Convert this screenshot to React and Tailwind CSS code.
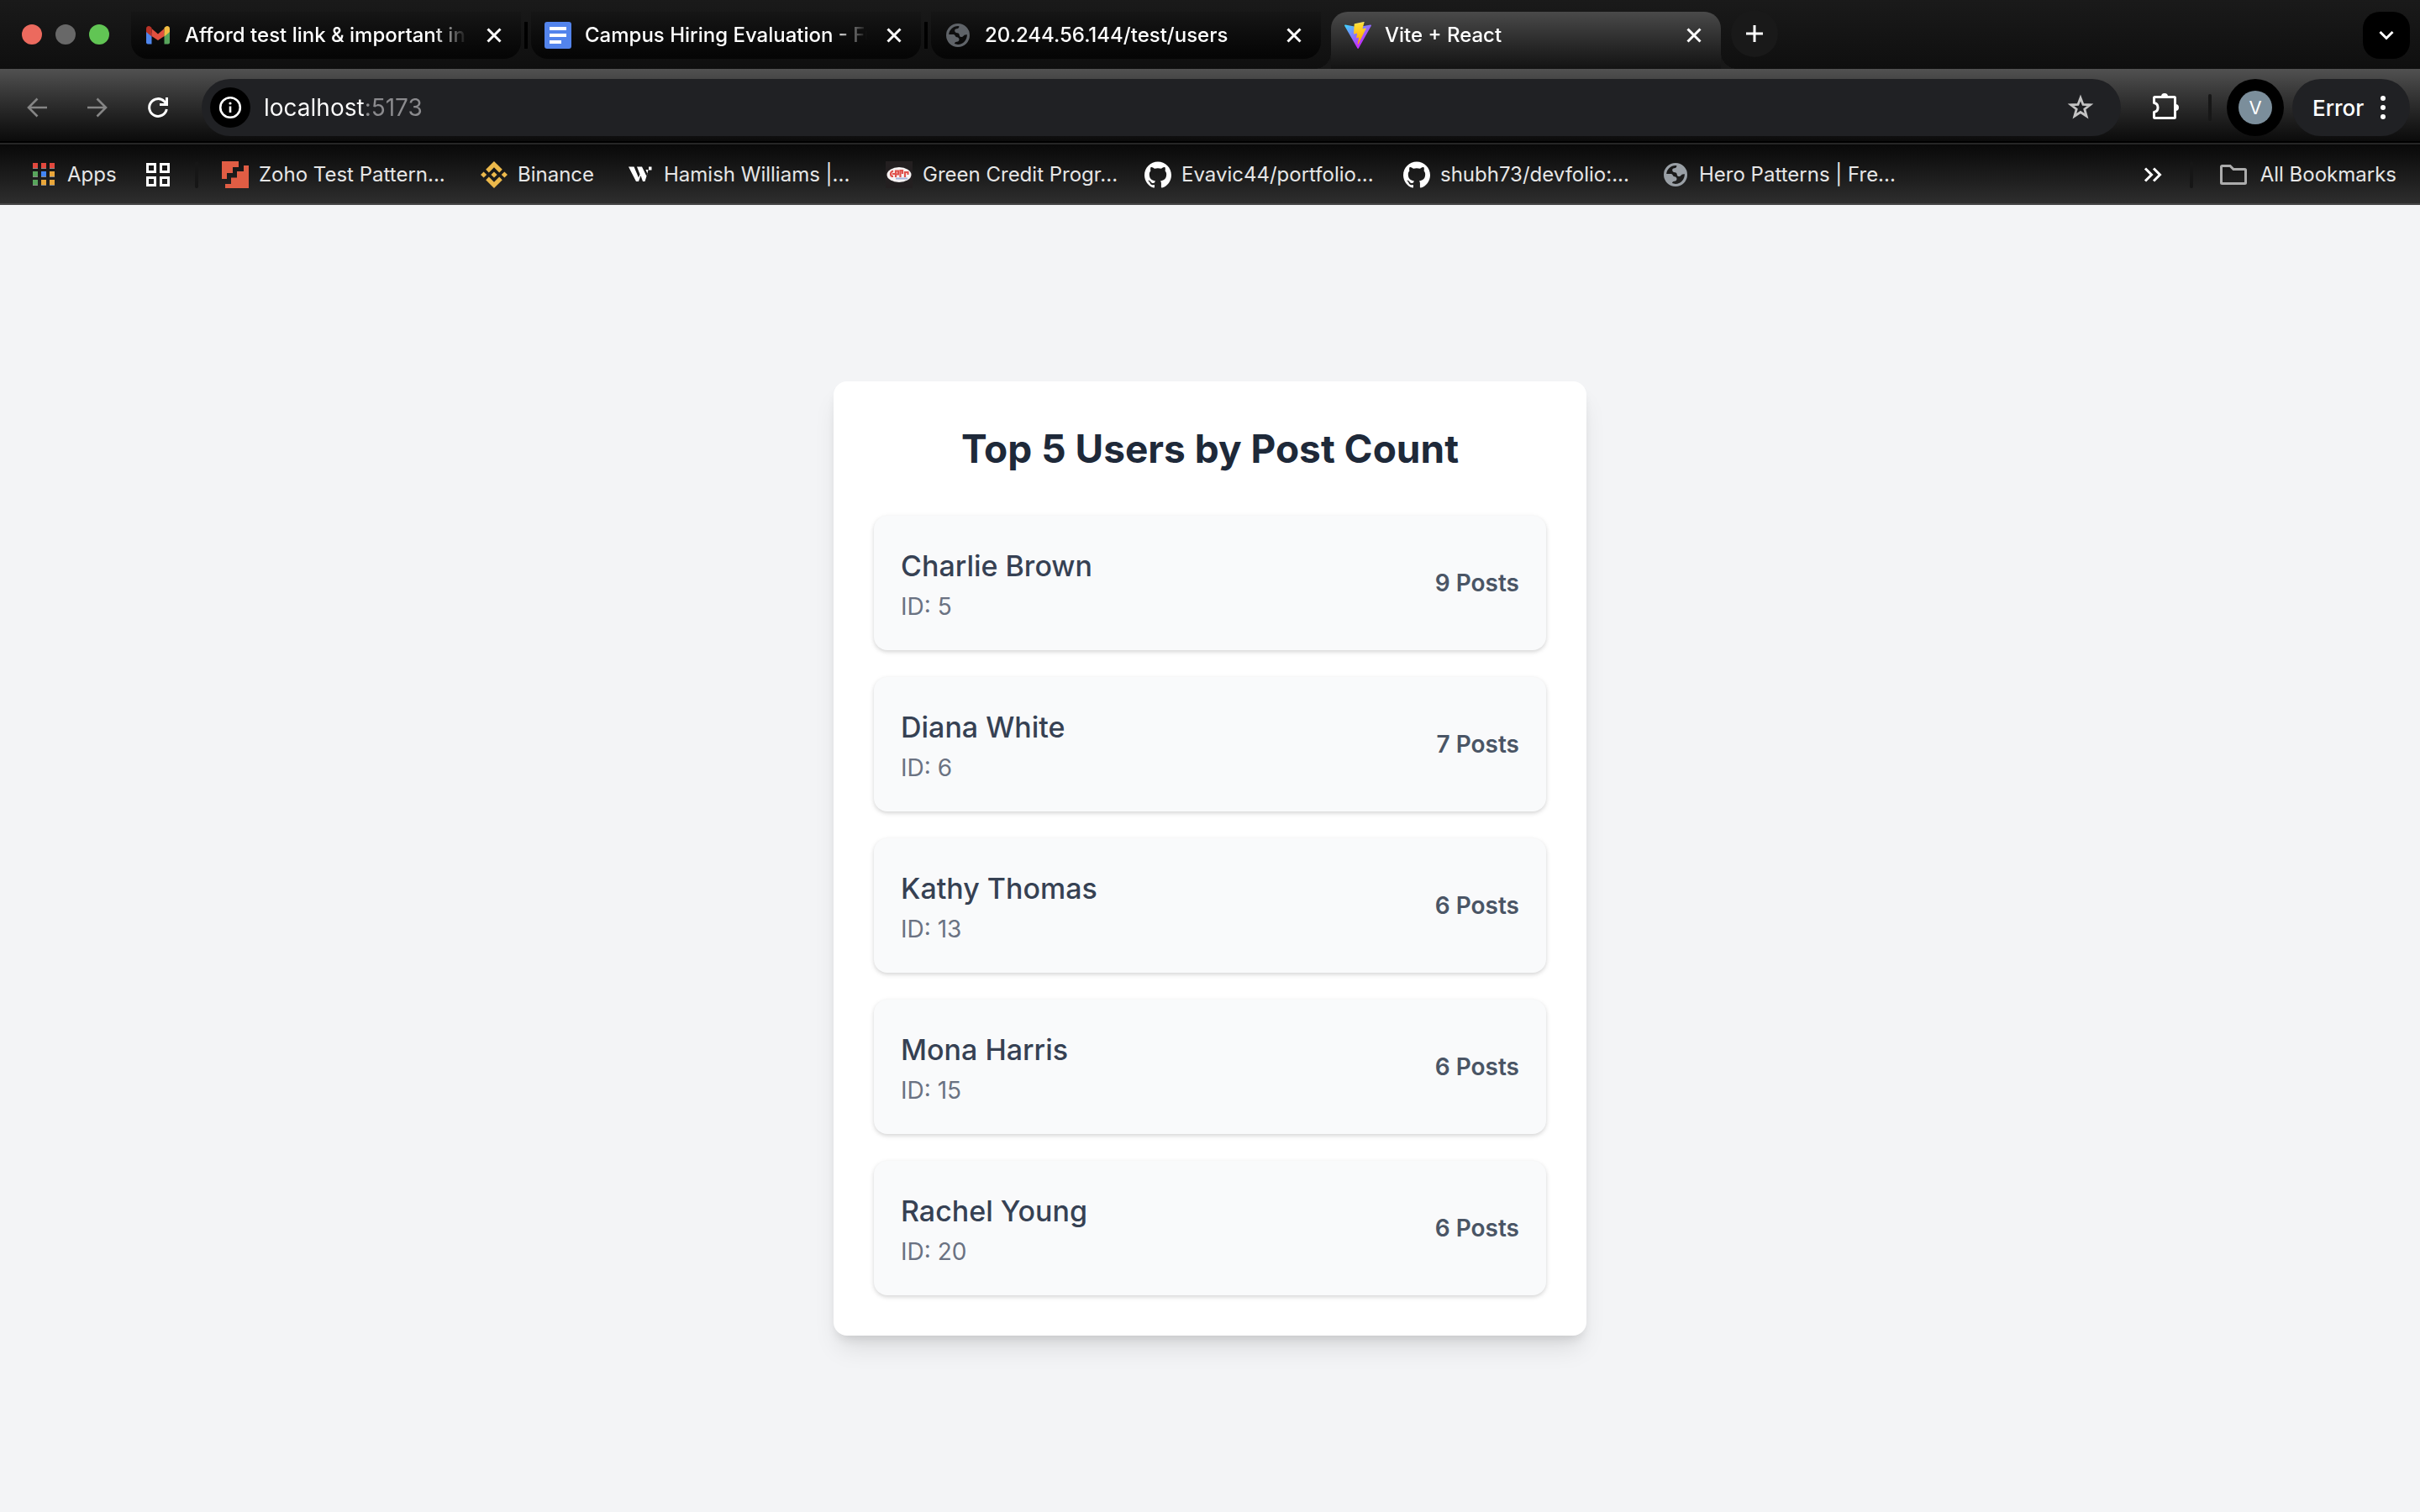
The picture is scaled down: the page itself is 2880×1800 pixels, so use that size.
import React from "react";
import { SiBinance, SiGithub } from "react-icons/si";

function GmailIcon() {
  return (
    <svg viewBox="0 0 32 32" className="size-8 shrink-0" aria-hidden="true">
      <path d="M2 9v15.500a2 2 0 0 0 2 2h4.500V13z" fill="#4f86ec" />
      <path d="M30 9v15.500a2 2 0 0 1-2 2h-4.500V13z" fill="#58a55c" />
      <path d="M8.500 8v9L16 22l7.500-5V8L16 14.500z" fill="#e2503f" />
      <path d="M2 12V8a3 3 0 0 1 5-2.200L8.500 7v10.500z" fill="#b93328" />
      <path d="M30 12V8a3 3 0 0 0-5-2.200L23.500 7v10.500z" fill="#f2bd42" />
    </svg>
  );
}

function DocsIcon() {
  return (
    <svg viewBox="0 0 32 32" className="size-8 shrink-0" aria-hidden="true">
      <rect width="32" height="32" rx="3" fill="#5384ec" />
      <path d="M6 6h20v4H6zM6 14h20v4H6zM6 22h14v4H6z" fill="#fff" />
    </svg>
  );
}

function GlobeIcon({ className }) {
  return (
    <svg viewBox="0 0 32 32" className={className} aria-hidden="true">
      <path
        fill="currentColor"
        fillRule="evenodd"
        d="M16 2a14 14 0 1 0 0 28 14 14 0 0 0 0-28zM5.200 15C5.700 9.500 10.300 5.200 16 5.100l1.500.1c-.2 2-1.200 2.800-3 3-1.600.2-2.400 1-2.300 2.600.1 1.700 1.300 2.200 3 2.400 1.900.2 2.400 1.200 2.600 2.700.2 1.500 1 2 2.600 2 1.800 0 2.300-1.300 3.200-2.100.8-.6 2-.7 3.300-.6C27 21.700 22 27 16 26.900c-1.700 0-2.800-.3-4-.8.1-1.500.9-2.300 2.600-2.400 1.800-.1 2.900-.9 2.900-2.600 0-1.500-1-2.500-2.700-2.800-1.400-.3-1.700-1.100-2.200-2-.5-1-1.300-1.300-2.700-1.300z"
      />
    </svg>
  );
}

function ViteIcon() {
  return (
    <svg viewBox="0 0 256 257" className="size-8 shrink-0" aria-hidden="true">
      <defs>
        <linearGradient id="viteA" x1="-.828%" x2="57.636%" y1="7.652%" y2="78.411%">
          <stop offset="0%" stopColor="#41d1ff" />
          <stop offset="100%" stopColor="#bd34fe" />
        </linearGradient>
        <linearGradient id="viteB" x1="43.376%" x2="50.316%" y1="2.242%" y2="89.030%">
          <stop offset="0%" stopColor="#ffea83" />
          <stop offset="8.333%" stopColor="#ffdd35" />
          <stop offset="100%" stopColor="#ffa800" />
        </linearGradient>
      </defs>
      <path
        fill="url(#viteA)"
        d="M255.153 37.938L134.897 252.976c-2.483 4.440-8.862 4.466-11.382.048L.875 37.958c-2.746-4.814 1.371-10.646 6.827-9.670l120.385 21.517a6.537 6.537 0 0 0 2.322-.004l117.867-21.483c5.438-.991 9.574 4.796 6.877 9.620Z"
      />
      <path
        fill="url(#viteB)"
        d="M185.432.063L96.440 17.501a3.268 3.268 0 0 0-2.634 3.014l-5.474 92.456a3.268 3.268 0 0 0 3.997 3.378l24.777-5.718c2.318-.535 4.413 1.507 3.936 3.838l-7.361 36.047c-.495 2.426 1.782 4.500 4.151 3.780l15.304-4.649c2.372-.720 4.652 1.360 4.150 3.788l-11.698 56.621c-.732 3.542 3.979 5.473 5.943 2.437l1.313-2.028l72.516-144.720c1.215-2.423-.880-5.186-3.540-4.672l-25.505 4.922c-2.396.462-4.435-1.770-3.759-4.114l16.646-57.705c.677-2.350-1.370-4.583-3.769-4.113Z"
      />
    </svg>
  );
}

function Stroke({ d, width = 3, className = "size-8" }) {
  return (
    <svg viewBox="0 0 32 32" className={className} fill="none" stroke="currentColor" strokeWidth={width} aria-hidden="true">
      <path d={d} />
    </svg>
  );
}

function ReloadIcon() {
  return (
    <svg viewBox="0 0 32 32" className="size-8" fill="none" stroke="currentColor" strokeWidth="3" aria-hidden="true">
      <path d="M26.300 18A10.400 10.400 0 1 1 23.600 8.800L26 11.500" />
      <path d="M26.500 4v8.500H18" />
    </svg>
  );
}

function InfoIcon() {
  return (
    <svg viewBox="0 0 32 32" className="size-8" fill="none" stroke="#fff" aria-hidden="true">
      <circle cx="16" cy="16" r="11.800" strokeWidth="2.600" />
      <path d="M16 14.500v7.500" strokeWidth="2.600" />
      <circle cx="16" cy="11" r="1.600" fill="#fff" stroke="none" />
    </svg>
  );
}

function PuzzleIcon() {
  return (
    <svg viewBox="0 2 36 36" className="size-9" fill="none" aria-hidden="true">
      <path
        d="M4.500 7.500h23a1 1 0 0 1 1 1v23a1 1 0 0 1-1 1h-23a1 1 0 0 1-1-1V25.500a5.600 5.600 0 0 0 0-11V8.500a1 1 0 0 1 1-1z"
        stroke="#fff"
        strokeWidth="3"
        strokeLinejoin="round"
      />
      <path d="M12 7a4 4 0 0 1 8 0zM29 16a4 4 0 0 1 0 8z" fill="#fff" />
    </svg>
  );
}

function AppsIcon() {
  const cells = [
    [3, 2, "#e2483d"], [13, 2, "#e2483d"], [23, 2, "#e2483d"],
    [3, 12, "#58a55c"], [13, 12, "#4285f4"], [23, 12, "#e9a63a"],
    [3, 22, "#58a55c"], [13, 22, "#e9a63a"], [23, 22, "#e9a63a"],
  ];
  return (
    <svg viewBox="0 0 32 32" className="size-8 shrink-0" aria-hidden="true">
      {cells.map(([x, y, c]) => (
        <g key={`${x}-${y}`}>
          <rect x={x} y={y} width="6" height="7" fill="#8a8a8a" />
          <rect x={x} y={y} width="6" height="6" fill={c} />
        </g>
      ))}
    </svg>
  );
}

function ZohoIcon() {
  return (
    <svg viewBox="0 0 32 32" className="size-8 shrink-0" aria-hidden="true">
      <path fill="#e05d44" d="M0 0h20v7h-7v7H6v7H0zM32 5h-6v7h-8v7.500h-7V27H4v5h28z" />
    </svg>
  );
}

function SlantMarkIcon() {
  return (
    <svg viewBox="0 0 32 32" className="size-8 shrink-0" fill="#fff" aria-hidden="true">
      <path d="M2 6.500h6.500L14 19.500l1.500-4-3.500-9h6L23.500 18l1-3-2-5h3l-1.500 6-2.500 8h-2.500L16.500 17 14 24h-3z" />
      <rect x="26" y="6.500" width="3.500" height="4" />
    </svg>
  );
}

function OvalBadgeIcon() {
  return (
    <svg viewBox="0 0 32 32" className="size-8 shrink-0" aria-hidden="true">
      <rect width="32" height="32" fill="#231f20" />
      <ellipse cx="16" cy="16" rx="14.500" ry="9" fill="#f7f3f3" />
      <g fill="none" stroke="#e0524d" strokeWidth="2.200">
        <path d="M9 11.500c-4 1-4 6.500 0 6.500M8 15h3M12 19v-7.500h3v4h-3M17.500 19v-8h2.500v4M23 19v-6h3.500v3" />
      </g>
      <path d="M12 20.500h14" stroke="#a8b4dc" strokeWidth="2" />
    </svg>
  );
}

function GithubIcon() {
  return <SiGithub className="size-8 shrink-0 text-white" aria-hidden="true" />;
}

function CloseButton({ label }) {
  return (
    <button aria-label={label} className="flex size-8 shrink-0 items-center justify-center text-white">
      <Stroke d="M8.500 8.500l15 15M23.500 8.500l-15 15" />
    </button>
  );
}

function TabLabel({ children }) {
  return (
    <span className="min-w-0 flex-1 overflow-hidden text-2xl font-medium whitespace-nowrap text-white [mask-image:linear-gradient(to_right,black_88%,transparent_100%)]">
      {children}
    </span>
  );
}

function InactiveTab({ icon, title }) {
  return (
    <div className="mb-3 flex h-14 w-[464px] items-center gap-4 rounded-b-[20px] bg-linear-to-b from-[#161616] to-[#050505] px-4">
      {icon}
      <TabLabel>{title}</TabLabel>
      <CloseButton label={`Close ${title}`} />
    </div>
  );
}

function TabDivider() {
  return <div className="mx-1 mb-6 h-8 w-1 bg-black" />;
}

function TabStrip() {
  return (
    <div className="flex h-[82px] items-end bg-linear-to-b from-[#1a1a1a] to-[#0f0f0f]">
      <div className="flex h-full items-center gap-4 px-[26px]">
        <button aria-label="Close window" className="size-6 rounded-full bg-[#ec6a5e]" />
        <button aria-label="Minimise window" className="size-6 rounded-full bg-[#686868]" />
        <button aria-label="Zoom window" className="size-6 rounded-full bg-[#61c554]" />
      </div>
      <InactiveTab icon={<GmailIcon />} title="Afford test link & important instructions" />
      <TabDivider />
      <InactiveTab icon={<DocsIcon />} title="Campus Hiring Evaluation - Full Stack" />
      <TabDivider />
      <InactiveTab
        icon={<GlobeIcon className="size-8 shrink-0 text-[#5f6368]" />}
        title="20.244.56.144/test/users"
      />
      <div className="relative ml-3 flex h-[68px] w-[464px] items-center gap-4 rounded-t-[20px] bg-linear-to-b from-[#4a4a4a] to-[#131313] px-4 pb-3">
        <div className="absolute right-full bottom-0 size-5 bg-[radial-gradient(circle_at_top_left,transparent_20px,#181818_20px)]" />
        <div className="absolute bottom-0 left-full size-5 bg-[radial-gradient(circle_at_top_right,transparent_20px,#181818_20px)]" />
        <ViteIcon />
        <TabLabel>Vite + React</TabLabel>
        <CloseButton label="Close Vite + React" />
      </div>
      <button
        aria-label="New tab"
        className="mb-[14px] ml-3 flex size-14 items-center justify-center rounded-full bg-[#191919] text-white"
      >
        <Stroke d="M16 6v20M6 16h20" />
      </button>
      <button
        aria-label="Search tabs"
        className="mr-3 mb-3 ml-auto flex size-14 items-center justify-center rounded-[20px] bg-black text-white"
      >
        <Stroke d="M8.500 12l7.500 7.500 7.500-7.500" />
      </button>
    </div>
  );
}

function Toolbar() {
  return (
    <div className="flex h-[90px] items-start border-b-2 border-[#262626] bg-black">
      <div className="flex h-[86px] w-full items-start bg-linear-to-b from-[#515151] to-[#0b0b0b] px-3 pt-3">
        <div className="-ml-1 flex h-[68px] items-center">
          <button aria-label="Back" className="flex w-[72px] justify-center text-[#858585]">
            <Stroke d="M28 16H6M16.500 5.500L6 16l10.500 10.500" width={2.6} />
          </button>
          <button aria-label="Forward" className="flex w-[72px] justify-center text-[#858585]">
            <Stroke d="M4 16h22M15.500 5.500L26 16 15.500 26.500" width={2.6} />
          </button>
          <button aria-label="Reload" className="flex w-[72px] justify-center text-white">
            <ReloadIcon />
          </button>
        </div>
        <div className="ml-4 flex h-[68px] flex-1 items-center rounded-full bg-[#202124] pr-8 pl-[10px]">
          <button aria-label="Site information" className="flex size-12 items-center justify-center rounded-full bg-black">
            <InfoIcon />
          </button>
          <input
            type="text"
            aria-label="Address"
            defaultValue="localhost:5173"
            className="ml-4 flex-1 bg-transparent bg-[linear-gradient(to_right,#ffffff_120px,#8b8b8e_120px)] bg-clip-text text-[28px] text-transparent outline-none"
          />
          <button aria-label="Bookmark this page" className="text-[#c4c4c4]">
            <Stroke
              d="M16 4.500l3 7.900 8.500.4-6.700 5.200 2.300 8.200L16 21.500l-7.100 4.700 2.300-8.200L4.500 12.800l8.500-.4z"
              width={2.8}
            />
          </button>
        </div>
        <div className="ml-4 flex h-[68px] items-center">
          <button aria-label="Extensions" className="flex w-[76px] justify-center">
            <PuzzleIcon />
          </button>
          <div className="ml-3 h-8 w-1 rounded-full bg-[#171717]" />
          <button
            aria-label="Profile"
            className="ml-[18px] flex size-[68px] items-center justify-center rounded-full bg-black"
          >
            <span className="flex size-10 items-center justify-center rounded-full bg-[#7b8e9b] text-[22px] text-white">
              V
            </span>
          </button>
          <button className="ml-[10px] flex h-[68px] w-[140px] items-center justify-between rounded-full bg-[#202124] pr-4 pl-6 text-[26px] font-medium text-white">
            Error
            <svg viewBox="0 0 32 32" className="size-8" fill="currentColor" aria-hidden="true">
              <circle cx="16" cy="5" r="3" />
              <circle cx="16" cy="16" r="3" />
              <circle cx="16" cy="27" r="3" />
            </svg>
          </button>
        </div>
      </div>
    </div>
  );
}

function Bookmark({ icon, wide, children }) {
  return (
    <a
      href="#"
      className={`flex items-center gap-3 whitespace-nowrap ${wide ? "w-[308px]" : "w-[174px]"}`}
    >
      {icon}
      {children}
    </a>
  );
}

function BookmarksBar() {
  return (
    <div className="flex h-[72px] items-center border-b-2 border-[#454545] bg-linear-to-b from-[#090909] to-[#2e2e2e] pt-0.5 pr-7 pl-9 text-2xl text-[#e6e6e6]">
      <a href="#" className="flex w-[136px] items-center gap-3">
        <AppsIcon />
        Apps
      </a>
      <button aria-label="Tab groups" className="text-white">
        <Stroke d="M3.500 3.500h9v9h-9zM19.500 3.500h9v9h-9zM3.500 19.500h9v9h-9zM19.500 19.500h9v9h-9z" />
      </button>
      <div className="mx-7 h-8 w-1 rounded-full bg-[#161616]" />
      <Bookmark wide icon={<ZohoIcon />}>Zoho Test Pattern...</Bookmark>
      <Bookmark icon={<SiBinance className="size-8 shrink-0 text-[#ecb94b]" aria-hidden="true" />}>Binance</Bookmark>
      <Bookmark wide icon={<SlantMarkIcon />}>Hamish Williams |...</Bookmark>
      <Bookmark wide icon={<OvalBadgeIcon />}>Green Credit Progr...</Bookmark>
      <Bookmark wide icon={<GithubIcon />}>Evavic44/portfolio...</Bookmark>
      <Bookmark wide icon={<GithubIcon />}>shubh73/devfolio:...</Bookmark>
      <Bookmark wide icon={<GlobeIcon className="size-8 shrink-0 text-[#9aa0a6]" />}>Hero Patterns | Fre...</Bookmark>
      <button aria-label="More bookmarks" className="ml-auto text-white">
        <Stroke d="M7 8.500l7.500 7.500L7 23.500M17 8.500l7.500 7.500L17 23.500" />
      </button>
      <div className="mr-8 ml-7 h-8 w-1 rounded-full bg-[#161616]" />
      <a href="#" className="flex items-center gap-4">
        <span className="text-[#acacac]">
          <Stroke d="M2.500 5.500h9.500l4 4h13.500a1 1 0 0 1 1 1v15a1 1 0 0 1-1 1h-27a1 1 0 0 1-1-1v-19a1 1 0 0 1 1-1z" />
        </span>
        All Bookmarks
      </a>
    </div>
  );
}

const users = [
  { id: 5, name: "Charlie Brown", posts: 9 },
  { id: 6, name: "Diana White", posts: 7 },
  { id: 13, name: "Kathy Thomas", posts: 6 },
  { id: 15, name: "Mona Harris", posts: 6 },
  { id: 20, name: "Rachel Young", posts: 6 },
];

function UserRow({ user }) {
  return (
    <li className="flex items-center justify-between rounded-2xl bg-gray-50 p-8 shadow-[0_2px_6px_rgba(0,0,0,0.1),0_2px_4px_rgba(0,0,0,0.08)]">
      <div>
        <p className="text-[34px] leading-14 font-medium text-gray-700">{user.name}</p>
        <p className="text-[28px] leading-10 text-gray-500">ID: {user.id}</p>
      </div>
      <span className="text-[28px] leading-10 font-semibold text-gray-600">{user.posts} Posts</span>
    </li>
  );
}

export default function App() {
  return (
    <div className="flex min-h-screen flex-col font-[Inter,sans-serif]">
      <header>
        <TabStrip />
        <Toolbar />
        <BookmarksBar />
      </header>
      <main className="flex flex-1 items-center justify-center bg-gray-100">
        <section className="w-full max-w-4xl rounded-2xl bg-white p-12 shadow-[0_20px_30px_-6px_rgba(0,0,0,0.1),0_8px_12px_-4px_rgba(0,0,0,0.1)]">
          <h1 className="mb-12 text-center text-[46px] leading-16 font-bold text-gray-800">
            Top 5 Users by Post Count
          </h1>
          <ul className="flex flex-col gap-8">
            {users.map((user) => (
              <UserRow key={user.id} user={user} />
            ))}
          </ul>
        </section>
      </main>
    </div>
  );
}
